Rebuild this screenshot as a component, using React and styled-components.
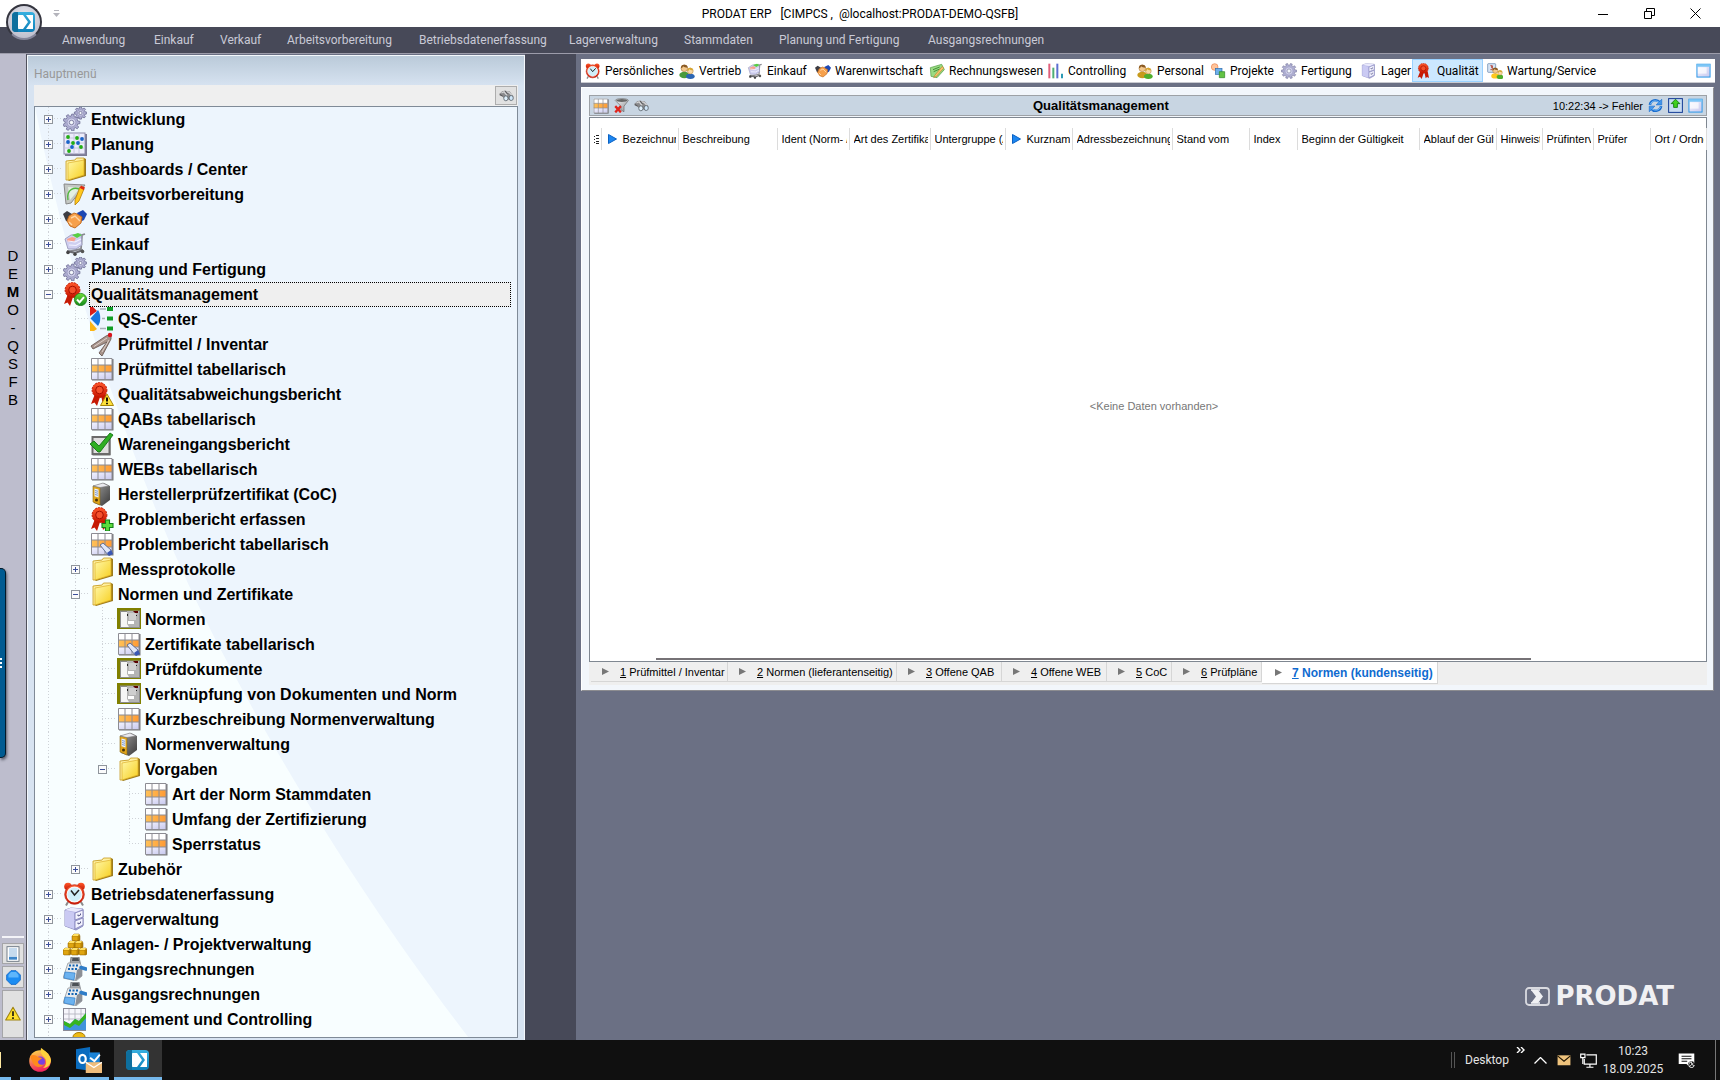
import React from "react";
import styled, { createGlobalStyle, css } from "styled-components";

const ui = `Roboto, "Open Sans", "Liberation Sans", sans-serif`;
const arial = `"Liberation Sans", Arial, sans-serif`;

const GlobalStyle = createGlobalStyle`
  * { box-sizing: border-box; }
  html, body { margin: 0; height: 100%; overflow: hidden; }
  body { font-family: ${ui}; font-size: 12px; color: #000; background: #6b7084; }
  button { font: inherit; color: inherit; border: 0; background: none; padding: 0; margin: 0; text-align: left; }
  ul { list-style: none; margin: 0; padding: 0; }
  svg { display: block; flex: none; }
`;

/* ---------- icons ---------- */

const Defs = styled.svg`
  position: absolute;
  width: 0;
  height: 0;
`;

const stops = (id, a, b, x2 = 0, y2 = 1) => (
  <linearGradient id={id} x1="0" y1="0" x2={x2} y2={y2}>
    <stop offset="0" stopColor={a} />
    <stop offset="1" stopColor={b} />
  </linearGradient>
);

const Gradients = () => (
  <Defs aria-hidden="true">
    <defs>
      {stops("gFolder", "#fff7a8", "#f7cf1e", 1, 1)}
      {stops("gOrange", "#ffc35a", "#ff9a33", 1, 0)}
      {stops("gLilac", "#f4f4ff", "#c9c9ee", 1, 1)}
      {stops("gRed", "#ff5a2c", "#c81400")}
      {stops("gGreen", "#6ddc3a", "#128a1c")}
      {stops("gSteel", "#f4f4f4", "#8d8f94", 1, 1)}
      {stops("gBinder", "#a2a2a2", "#3a3a3a", 1, 1)}
      {stops("gFire", "#ffe14a", "#f0265c", 0.3, 1)}
      {stops("gProdat", "#37b0e0", "#0d7fb8")}
    </defs>
  </Defs>
);

const gearPath = (cx, cy, r, n) => {
  const pts = [];
  const step = (Math.PI * 2) / n;
  for (let i = 0; i < n; i += 1) {
    const a = i * step;
    [[-0.32, 0.76], [-0.2, 1], [0.2, 1], [0.32, 0.76]].forEach(([da, k]) => {
      const t = a + da * step;
      pts.push(`${(cx + Math.cos(t) * r * k).toFixed(2)} ${(cy + Math.sin(t) * r * k).toFixed(2)}`);
    });
  }
  return `M${pts.join("L")}Z`;
};

const gear = (cx, cy, r, n) => (
  <g>
    <path d={gearPath(cx, cy, r, n)} fill="#aeaed2" stroke="#6f6f96" strokeWidth="0.8" />
    <circle cx={cx} cy={cy} r={r * 0.52} fill="#cfcfea" stroke="#8a8ab2" strokeWidth="0.6" />
    <circle cx={cx} cy={cy} r={r * 0.26} fill="#f4f8fc" stroke="#6b6b92" strokeWidth="0.8" />
  </g>
);

const grid = (
  <g>
    <rect x="2" y="2" width="21.500" height="21.500" fill="#77777b" />
    <rect x="1" y="1" width="21" height="21" fill="#fff" />
    <rect x="1" y="15" width="21" height="7" fill="url(#gLilac)" />
    <rect x="1" y="8" width="21" height="7" fill="url(#gOrange)" />
    <path d="M1.500 1.500H22v21H1.500ZM8 1.500v21M15 1.500v21M1 8h21M1 15h21" fill="none" stroke="#8c8c93" strokeWidth="1" />
  </g>
);

const rosette = (
  <g>
    <path d="M5 12 1 22l3.500-1.500L7 24l3-9ZM11 13l2 10 2-2 3 1.500-2-10Z" fill="#c61a04" />
    <circle cx="9.500" cy="8" r="7.400" fill="url(#gRed)" stroke="#c01800" strokeWidth="1" strokeDasharray="2 1" />
    <circle cx="9.500" cy="8" r="3.800" fill="#f4512c" stroke="#a51000" strokeWidth="1" />
  </g>
);

const people = (a, b) => (
  <g>
    <ellipse cx="8" cy="18" rx="7.500" ry="5" fill={a} />
    <circle cx="8" cy="8" r="5" fill="#f3c88c" stroke="#9a6a2a" strokeWidth="0.8" />
    <path d="M3 8a5 5 0 0 1 10-1c-3 0-6-1-7-2 0 2-2 3-3 3Z" fill="#8a5a24" />
    <ellipse cx="17" cy="20" rx="6.500" ry="4" fill={b} />
    <circle cx="17" cy="12" r="4.300" fill="#f8d8a4" stroke="#b58536" strokeWidth="0.8" />
    <path d="M12.700 12a4.300 4.300 0 0 1 8.600-1c-3 0-5-1-6-2 0 2-1 3-2.600 3Z" fill="#d8a630" />
  </g>
);

const binocular = (
  <g>
    <path d="M1 9 5 5l5-1 3 1 4 0 6 8-4 7-5-2-4 1-4-5-5-2Z" fill="#8a8a8c" />
    <path d="M4 8l4-2 5 6M12 6l4 1 5 5" stroke="#d4d4d6" strokeWidth="2" fill="none" />
    <path d="M1 10l5 3M10 5l4 5" stroke="#4d4d50" strokeWidth="1.400" />
    <ellipse cx="11" cy="16.500" rx="3.400" ry="4" fill="#dff0fb" stroke="#59616a" strokeWidth="1.300" />
    <ellipse cx="19.500" cy="16" rx="3.400" ry="4" fill="#cfe6f8" stroke="#59616a" strokeWidth="1.300" />
  </g>
);

const register = (
  <g>
    <path d="M8 0h8l1.500 7H7Z" fill="#a4a7ab" stroke="#77797e" strokeWidth="0.8" />
    <path d="M9.500 1h6l.5 3H9Z" fill="#4c5156" />
    <path d="M5 6h12l2 4v9l-6 5L0 21Z" fill="#e6e9ec" stroke="#979aa0" strokeWidth="0.8" />
    <path d="M12 24l2-11 5-3v9Z" fill="#8b8f96" />
    <path d="M2 15l10 1-1 7-10-2Z" fill="#6bb2f0" stroke="#2f7dc8" strokeWidth="0.7" />
    <path d="M6 8.500h2M9.500 8.500h2M13 8.500h2M5 12h2M8.500 12h2M12 12h2" stroke="#1465b4" strokeWidth="2" />
    <path d="M18 10.500l5 1.500" stroke="#2f7dc8" strokeWidth="3.500" strokeLinecap="round" />
  </g>
);

const form = (
  <g>
    <path d="M0 1h24v21H0Z" fill="#808000" />
    <path d="M3 3.500h20V21H3Z" fill="#8c8c8c" />
    <path d="M4 5h17v15H4Z" fill="#f6f6f6" />
    <path d="M10 4h12v16H12l-2-3Z" fill="#b4b4b4" />
    <path d="M12 6h7v7h-7Z" fill="#cfcfcf" />
    <path d="M11 14h6v3h-6Z" fill="#fff" />
    <path d="M16 4h5v2h-3Z" fill="#5b0000" />
    <path d="M10 7h1v2h-1ZM19 8h1v1h-1Z" fill="#222" />
  </g>
);

const binder = (
  <g>
    <path d="M3 4 14 1l6 3v14l-8 6-8-3Z" fill="url(#gBinder)" />
    <path d="M3 4 10 5.500V23l-7-3Z" fill="#e0a51c" stroke="#8a6814" strokeWidth="0.6" />
    <path d="M3 4 13 1l6 3-9 1.500Z" fill="#e9e9ee" stroke="#777" strokeWidth="0.6" />
    <path d="M4.500 6.500l4 1v8l-4-1.200Z" fill="#e8f0ff" />
    <path d="M5 8.500l3 .8M5 10.500l3 .8M5 12.500l3 .8" stroke="#7793c2" strokeWidth="0.9" />
    <circle cx="6.500" cy="18" r="1.500" fill="#493408" />
  </g>
);

const clock = (
  <g>
    <path d="M5 20 3 23.500M18 20l2 3.500" stroke="#8b8b8b" strokeWidth="2" />
    <circle cx="5" cy="4.500" r="3.800" fill="url(#gRed)" />
    <circle cx="18" cy="4.500" r="3.800" fill="url(#gRed)" />
    <circle cx="11.500" cy="12.500" r="9.800" fill="url(#gRed)" stroke="#c03020" strokeWidth="0.8" />
    <circle cx="11.500" cy="12.500" r="7.400" fill="#cfeffa" stroke="#f7f7f7" strokeWidth="1.200" />
    <path d="M8 8.500l3.500 4.500L16 8" fill="none" stroke="#222" strokeWidth="1.500" />
  </g>
);

const cabinet = (
  <g>
    <path d="M2 3 8 1l12 1v17l-7 4-11-4Z" fill="#b4b4e4" stroke="#8484ba" strokeWidth="0.9" />
    <path d="M2 3 8 .8l12 1.200-7 3Z" fill="#e9e9fc" />
    <path d="M2 3.500l9 2V22l-9-3Z" fill="#cacaf3" />
    <path d="M12 6l8-3v7l-8 3ZM12 14l8-3v7l-8 4Z" fill="#f4f4ff" stroke="#8787bb" strokeWidth="0.9" />
    <path d="M15 7.500v1.500l2.500-1V6.500M15 15.500v1.500l2.500-1V14.500" fill="none" stroke="#5a5a8a" />
  </g>
);

const cart = (
  <g>
    <path d="M4 20l14-3 1-14 3-1" stroke="#88888f" strokeWidth="1.800" fill="none" />
    <path d="M2 7l6-4 10-1 1 11-6 4H5Z" fill="#cfcff0" stroke="#9a9abc" strokeWidth="0.9" />
    <path d="M4 7l5-2 4 1-2 4-6 0Z" fill="#f8a08c" />
    <path d="M9 3l6-2 4 2-5 3Z" fill="#57cf42" />
    <path d="M5 9l7 1 6-3M6 13l7 .5 5-3" stroke="#f2f2ff" strokeWidth="1.200" fill="none" />
    <path d="M4 19l8 2 8-3" stroke="#6a6a70" strokeWidth="2" fill="none" />
    <circle cx="5" cy="20.500" r="1.800" fill="#444" />
    <circle cx="12" cy="22.300" r="1.700" fill="#444" />
    <circle cx="19.500" cy="19.500" r="1.800" fill="#555" />
  </g>
);

const shake = (
  <g>
    <path d="M0 7l4-3 5 3-2 8-4-1Z" fill="#3c3c44" />
    <path d="M24 7l-4-4-6 3 3 9 4-2Z" fill="#1c47b4" />
    <path d="M6 9l5-3 3 1 5 3-1 6-6 5-5-2-3-5Z" fill="#f6a04c" stroke="#bd6418" strokeWidth="0.9" />
    <path d="M8 11l4-2 5 5M9 18l-3-3" stroke="#ffd6a4" strokeWidth="1.400" fill="none" />
  </g>
);

const folder = (
  <g>
    <path d="M4 4 13 3l1-2h7l2 1v17L6 24 4 22Z" fill="#9c7c1e" />
    <path d="M3 4 12 3l1.500-2H21v17L5 23H3Z" fill="#fff0a0" stroke="#c79a1c" strokeWidth="0.8" />
    <path d="M5 6l16-3v15L5 23Z" fill="url(#gFolder)" stroke="#d6a51a" strokeWidth="0.6" />
  </g>
);

const setsquare = (
  <g>
    <path d="M1 2l21 1L8 21 3 22Z" fill="#c4c8c4" stroke="#888" strokeWidth="1" />
    <path d="M5 5l12 1-10 12Z" fill="#e4f0e2" />
    <path d="M5 18C3 7 12 4 18 8" fill="none" stroke="#4fb83c" strokeWidth="1.400" />
    <path d="M17 5l4 2-5 12-4 4 0-5Z" fill="#ffc81e" stroke="#b57f08" strokeWidth="0.8" />
    <path d="M18 3.500l4 2-1.200 2.500-4-2Z" fill="#e02a10" />
  </g>
);

const chart = (
  <g>
    <rect x="0.500" y="1.500" width="22" height="22" fill="#f6f6fc" stroke="#8a8a96" />
    <path d="M6 2v12M12 2v12M18 2v12M1 7h21M1 12h21" stroke="#b5b5c2" strokeWidth="0.9" />
    <path d="M1 14l6 3 5-5 4 2 7-8v17H1Z" fill="#3f93dc" />
    <path d="M1 14l6 3 5-5 4 2 7-8v5l-7 8-4-2-5 4-6-3Z" fill="#36b41e" />
  </g>
);

const gold = (x, y) => (
  <g key={`${x}-${y}`} transform={`translate(${x} ${y})`}>
    <path d="M0 2 2 0h5l1 2v4l-1 1H1L0 6Z" fill="#b98406" stroke="#8a5f04" strokeWidth="0.5" />
    <path d="M0 2 2 0h5L6 2Z" fill="#ffe063" />
    <path d="M0.500 2.500h5v4h-5Z" fill="#dfa510" />
  </g>
);

const prodat = (
  <g>
    <rect x="0" y="2" width="23" height="20" rx="4" fill="url(#gProdat)" />
    <path d="M0 6a4 4 0 0 1 4-4h2v20H4a4 4 0 0 1-4-4Z" fill="#0e6f9e" />
    <path d="M6 5h5l5 7-5 7H6l4-7Z" fill="#fff" />
    <path d="M6 5l5 7-5 7Z" fill="#fff" />
    <path d="M14 5h7v14h-7l5-7Z" fill="#fff" />
  </g>
);

const SHAPES = {
  gears: (
    <g>
      {gear(8.500, 15.500, 8.500, 9)}
      {gear(17.500, 6, 6.200, 8)}
    </g>
  ),
  gear: gear(12, 12, 11.500, 10),
  plan: (
    <g>
      <rect x="2" y="2" width="22" height="22" fill="#7b7b94" />
      <rect x="1" y="1" width="21" height="21" fill="#ececfb" stroke="#8a8aa8" strokeWidth="1" />
      <path d="M6 1v21M11 1v21M16 1v21M1 6h21M1 11h21M1 16h21" stroke="#c4c4dd" strokeWidth="0.9" />
      {[[5, 5], [14, 6], [10, 11], [18, 15], [6, 19]].map(([x, y]) => <circle key={`g${x}`} cx={x} cy={y} r="1.900" fill="#22ae14" />)}
      {[[19, 7], [5, 10], [15, 11], [9, 15]].map(([x, y]) => <circle key={`b${x}`} cx={x} cy={y} r="1.900" fill="#1663c9" />)}
    </g>
  ),
  folder,
  setsquare,
  shake,
  cart,
  rosette,
  rosetteOk: (
    <g>
      {rosette}
      <circle cx="17.500" cy="17.500" r="6.200" fill="url(#gGreen)" stroke="#1b7a1b" strokeWidth="0.7" />
      <path d="M14 17.500l2.600 2.700 4.400-5" fill="none" stroke="#fff" strokeWidth="2" />
    </g>
  ),
  rosetteWarn: (
    <g>
      {rosette}
      <path d="M17 12 23.500 23.500H10.500Z" fill="#ffe23c" stroke="#a88608" strokeWidth="1" />
      <path d="M17 15.500v4M17 20.700v1.600" stroke="#000" strokeWidth="1.800" />
    </g>
  ),
  rosettePlus: (
    <g>
      {rosette}
      <path d="M15.500 13h4v3.500H23v4h-3.500V24h-4v-3.500H12v-4h3.500Z" fill="#5cdb3c" stroke="#14801a" strokeWidth="1.100" />
    </g>
  ),
  center: (
    <g>
      <path d="M0 0h3l4 4-7 5Z" fill="#d91e18" />
      <path d="M0.500 11.500 8 3c3 4 3 12 0 16Z" fill="#1976e0" />
      <path d="M0 14l7 8-3 2H0Z" fill="#fdb515" />
      <path d="M10 2h6M12 11.500h3M10 21.500h6" stroke="#a8b0b8" strokeWidth="1.400" />
      <path d="M17 0h6v4h-6ZM17 9.500h6v4h-6ZM17 19.500h6v4h-6Z" fill="#0f9d24" />
    </g>
  ),
  calliper: (
    <g>
      <path d="M21 2 16 4 1 14l2 3 14-7-8 11 3 3L21 7Z" fill="#a8948c" stroke="#6c5a54" strokeWidth="0.9" />
      <path d="M4 14.500 17 6M12 20 19 8" stroke="#ddd0ca" strokeWidth="1" />
      <circle cx="20" cy="3" r="2.200" fill="#d8141c" />
    </g>
  ),
  grid,
  gridTool: (
    <g>
      {grid}
      <path d="M10 13l3-2 8 7 1 4-4 1Z" fill="#dfe6f8" stroke="#56648c" strokeWidth="0.9" />
      <path d="M17 21l4-3 2 4-4 2Z" fill="#3a57b4" />
    </g>
  ),
  check: (
    <g>
      <rect x="2.500" y="4.500" width="18" height="19" fill="#777" />
      <rect x="2.500" y="5" width="17" height="17" fill="#dedede" stroke="#6a6a6a" strokeWidth="2" />
      <path d="M0 12l4-3 5 5L20 1l3 2L10 20H8Z" fill="#2fae22" stroke="#127414" strokeWidth="0.9" />
    </g>
  ),
  binder,
  form,
  clock,
  cabinet,
  bars: <g>{[[9, 2], [5, 9], [12, 9], [0, 16], [8, 16], [16, 16]].map(([x, y]) => gold(x, y))}</g>,
  register,
  chart,
  coin: <ellipse cx="16" cy="5" rx="6" ry="4.500" fill="#eebb14" stroke="#a87c08" />,
  people: people("#4a9a3c", "#2c66b4"),
  staff: people("#c79a1c", "#4fae2c"),
  service: (
    <g>
      <rect x="1" y="1" width="12" height="13" rx="1" fill="#d6e4f4" stroke="#5b7da8" />
      <path d="M5 4h3v2H6h2v4H5" fill="none" stroke="#b03020" strokeWidth="1.200" />
      <g transform="translate(6 5) scale(.8)">{people("#ffc81e", "#4fae2c")}</g>
    </g>
  ),
  invoice: (
    <g>
      <path d="M2 7 19 2l4 8-11 12-9-2Z" fill="#9adb84" stroke="#4b9a3c" />
      <path d="M6 10l10-4M7 13l9-4" stroke="#3c8a30" strokeWidth="1.400" />
      <path d="M20 5 9 18l-2 4 4-2L22 8Z" fill="#f9c46c" stroke="#b0761c" strokeWidth="0.8" />
    </g>
  ),
  barChart: (
    <g>
      <path d="M2 1v22" stroke="#e0607c" strokeWidth="3" />
      <path d="M8 7v16" stroke="#4fae74" strokeWidth="3" />
      <path d="M14 1v22" stroke="#5b6fd0" strokeWidth="3" />
      <path d="M21 16v7" stroke="#2c9ab4" strokeWidth="3" />
    </g>
  ),
  project: (
    <g>
      <circle cx="7" cy="6" r="5" fill="#ffc49a" stroke="#e8804c" />
      <rect x="8" y="8" width="10" height="9" fill="#6db0ea" stroke="#2f6cae" />
      <path d="M14 13h8v9h-8Z" fill="#63c344" stroke="#2a8420" />
    </g>
  ),
  window: (
    <g>
      <rect x="1.500" y="2" width="21" height="20.500" fill="url(#gLilac)" stroke="#2a97e8" strokeWidth="1.600" />
      <rect x="3" y="7" width="14" height="10" fill="#fff" opacity="0.7" />
      <rect x="1.500" y="2" width="21" height="4" fill="#7cc6f6" />
    </g>
  ),
  binocular,
  filterOff: (
    <g>
      <path d="M2 4c0-4 21-4 21 0l-7 9v9l-5-3v-6Z" fill="url(#gSteel)" stroke="#666" />
      <ellipse cx="12.500" cy="4" rx="9" ry="2.500" fill="#666" />
      <path d="M2 13l9 10M11 13 2 23" stroke="#e0241c" strokeWidth="3.600" />
    </g>
  ),
  refresh: (
    <g fill="none" stroke="#1c6fd0" strokeWidth="4">
      <path d="M3 11c1-8 11-10 16-4" />
      <path d="M21 13c-1 8-11 10-16 4" />
      <path d="M22 2v9h-9ZM2 22v-9h9Z" fill="#3f94ea" stroke="#1c6fd0" strokeWidth="1" />
      <path d="M4 10c2-6 9-7 14-3M20 14c-2 6-9 7-14 3" stroke="#7cc0fa" strokeWidth="1.500" />
    </g>
  ),
  upload: (
    <g>
      <rect x="1" y="1" width="22" height="22" fill="#c9dcf2" stroke="#123a94" strokeWidth="1.600" />
      <path d="M12 2l7 7h-4v6H9V9H5Z" fill="#42d11e" stroke="#117a10" strokeWidth="1.400" />
    </g>
  ),
  page: (
    <g>
      <rect x="3" y="1" width="18" height="22" fill="#fff" stroke="#6d7884" strokeWidth="1.400" />
      <path d="M6 4.500h12M6 7.500h12M6 10.500h12M6 13.500h12" stroke="#8db6dc" strokeWidth="1.500" />
      <rect x="6" y="16" width="12" height="4.500" fill="#3f86c8" />
    </g>
  ),
  ball: (
    <g>
      <path d="M8 1h8l7 7v8l-7 7H8l-7-7V8Z" fill="#1c8cf2" stroke="#0b5fc0" strokeWidth="1.200" />
      <path d="M8 3h8l4 5v4H4V8Z" fill="#7cc8ff" opacity="0.7" />
    </g>
  ),
  warn: (
    <g>
      <path d="M12 2 23 21H1Z" fill="#ffe02c" stroke="#a08410" strokeWidth="1.600" strokeLinejoin="round" />
      <path d="M12 8v7M12 17v2.500" stroke="#111" strokeWidth="2.400" />
    </g>
  ),
  prodat,
  firefox: (
    <g>
      <circle cx="12" cy="13" r="10.800" fill="url(#gFire)" />
      <path d="M13 0c3 2 9 6 10 12 0 5-4 8-8 8 4-3 4-8 1-11-2-2-4-4-3-9Z" fill="#ffd23c" />
      <circle cx="12" cy="13.500" r="5" fill="#7a3fe0" />
      <path d="M2 8c3-2 6-1 8 1l4 1c-1 2-4 2-4 4s3 4 6 2c-2 4-9 4-11-1C4 13 3 11 2 8Z" fill="#ff8a1c" />
    </g>
  ),
  outlook: (
    <g>
      <path d="M0 2 13 0v22L0 20Z" fill="#0a6cbf" />
      <path d="M12 5h10v11H12Z" fill="#1b83d6" />
      <path d="M13 10l4 3 5-6" stroke="#fff" strokeWidth="1.800" fill="none" />
      <ellipse cx="6" cy="11" rx="3" ry="3.800" fill="none" stroke="#fff" strokeWidth="2" />
      <path d="M9 14h15v10H9Z" fill="#f0bd7c" />
      <path d="M9 14l7.500 5L24 14" fill="none" stroke="#fff" strokeWidth="1.200" />
    </g>
  ),
  mail: (
    <g>
      <rect x="1" y="4" width="22" height="17" fill="#eec27c" />
      <path d="M1 5l11 9L23 5" fill="none" stroke="#201400" strokeWidth="2" />
    </g>
  ),
  network: (
    <g fill="none" stroke="#fff" strokeWidth="1.700">
      <path d="M9 4h14v13H6V10M14 17v4M9 21.500h10" />
      <path d="M1 3h6v5H1ZM4 8v9" />
    </g>
  ),
  notice: (
    <g>
      <path d="M1 2h22v15h-6v5l-5-5H1Z" fill="#fff" />
      <path d="M5 6h14M5 9.500h14M5 13h8" stroke="#101010" strokeWidth="1.500" />
      <circle cx="19" cy="18" r="5" fill="#101010" />
      <path d="M19 14a4 4 0 1 0 4 5 4 4 0 0 1-4-5M16 21l6-6" fill="none" stroke="#fff" strokeWidth="1.200" />
    </g>
  ),
};

const Icon = ({ name, size = 24 }) => (
  <svg width={size} height={size} viewBox="0 0 24 24" aria-hidden="true">
    {SHAPES[name]}
  </svg>
);

/* ---------- window frame ---------- */

const Screen = styled.div`
  position: relative;
  display: flex;
  flex-direction: column;
  height: 100vh;
`;

const TitleBar = styled.header`
  display: grid;
  grid-template-columns: 1fr auto 1fr;
  align-items: center;
  height: 27px;
  flex: none;
  background: #fff;
`;

const QuickAccess = styled.button`
  margin-left: 53px;
  justify-self: start;
`;

const Title = styled.h1`
  margin: 0;
  font: 12px/24px ${ui};
  white-space: pre;
`;

const WindowButtons = styled.div`
  display: flex;
  justify-content: flex-end;
  padding-right: 2px;
`;

const WindowButton = styled.button`
  display: grid;
  place-items: center;
  width: 46px;
  height: 24px;
`;

const Orb = styled.button`
  position: absolute;
  left: 6px;
  top: 4px;
  z-index: 2;
  display: grid;
  place-items: center;
  width: 36px;
  height: 36px;
  border: 2px solid #34353f;
  border-bottom-color: #85869a;
  border-radius: 50%;
  background: radial-gradient(circle at 50% 35%, #e9e9ef, #b3b4c4);
`;

const MenuBar = styled.nav`
  display: flex;
  height: 27px;
  flex: none;
  padding-left: 62px;
  background: #474958;
  border-bottom: 1px solid #9c9caa;
`;

const MenuItem = styled.button`
  width: ${(p) => p.$w}px;
  flex: none;
  color: #c9cad6;
  line-height: 26px;
  white-space: nowrap;
`;

const Workspace = styled.div`
  display: flex;
  flex: 1;
  min-height: 0;
`;

/* ---------- left strip ---------- */

const Strip = styled.aside`
  display: flex;
  flex-direction: column;
  width: 27px;
  flex: none;
  background: #bdbdcd;
  border-right: 1px solid #50515c;
  padding-bottom: 2px;
`;

const Letters = styled.div`
  padding-top: 193px;
  flex: 1;
  font-family: ${arial};
  font-size: 15px;
  line-height: 18px;
  text-align: center;

  b {
    display: block;
    font-weight: 400;
  }
  b:nth-child(3) {
    font-weight: 700;
  }
`;

const Handle = styled.button`
  position: absolute;
  left: 0;
  top: 568px;
  width: 6px;
  height: 190px;
  border: 1px solid #001a2a;
  border-left: 0;
  border-radius: 0 5px 5px 0;
  background: #005b91;
  box-shadow: 1px 2px 3px #555866;

  &::after {
    content: "";
    display: block;
    width: 2px;
    height: 11px;
    background: repeating-linear-gradient(#fff 0 2px, transparent 2px 4px);
  }
`;

const StripTools = styled.div`
  display: flex;
  flex-direction: column;
  gap: 2px;
  margin: 0 2px;
  padding-top: 5px;
  border-top: 2px solid #f4f4f8;
`;

const StripButton = styled.button`
  display: grid;
  place-items: center;
  height: ${(p) => p.$h}px;
  border: 1px solid #a5a5a8;
  background: #e1e1e1;
`;

/* ---------- main menu window ---------- */

const MenuWindow = styled.section`
  display: flex;
  flex-direction: column;
  width: 498px;
  flex: none;
  margin-top: 1px;
  padding: 0 6px 2px 6px;
  border: 1px solid #f4f8fc;
  border-bottom: 0;
  background: linear-gradient(#bacad9, #d7e3f1 30px);
`;

const MenuTitle = styled.h2`
  margin: 0;
  padding-top: 8px;
  height: 29px;
  font: 12px/20px ${ui};
  color: #989898;
`;

const SearchRow = styled.div`
  display: flex;
  height: 21px;
  flex: none;
  background: #efefef;
`;

const SearchInput = styled.input`
  flex: 1;
  border: 0;
  background: none;
  outline: none;
`;

const SearchButton = styled.button`
  display: grid;
  place-items: center;
  width: 22px;
  height: 19px;
  margin: 1px 1px 0 0;
  border: 1px solid #adadad;
  background: #e1e1e1;
`;

const TreeBox = styled.div`
  position: relative;
  flex: 1;
  min-height: 0;
  overflow: hidden;
  border: 1px solid #7f8a97;
  background: #edf5fd;
`;

const Backdrop = styled.svg`
  position: absolute;
  inset: 0;
  width: 100%;
  height: 100%;
`;

const Tree = styled.ul`
  position: relative;
`;

const Row = styled.li`
  display: flex;
  height: 25px;
`;

const dotsV = "repeating-linear-gradient(#cfd3d8 0 1px, transparent 1px 3px)";
const dotsH = "repeating-linear-gradient(90deg, #cfd3d8 0 1px, transparent 1px 3px)";

const Guide = styled.span`
  width: 27px;
  flex: none;
  background: ${(p) => (p.$on ? dotsV : "none")} 13px 0 / 1px 100% no-repeat;
`;

const Branch = styled.span`
  display: grid;
  place-items: center;
  width: 27px;
  flex: none;
  background:
    ${dotsV} 13px 0 / 1px ${(p) => (p.$last ? "12px" : "100%")} no-repeat,
    ${dotsH} 13px 11px / 14px 1px no-repeat;
`;

const Expander = styled.button`
  display: grid;
  place-items: center;
  width: 9px;
  height: 9px;
  border: 1px solid #8f959c;
  background: #fbfbfb;
`;

const IconCell = styled.span`
  width: 27px;
  flex: none;
  padding-left: 1px;
`;

const Label = styled.button`
  flex: 1;
  margin-right: 6px;
  border: 1px dotted transparent;
  padding-left: 1px;
  font: bold 16px/22px ${arial};
  white-space: nowrap;
  ${(p) =>
    p.$selected &&
    css`
      border-color: #000;
      background: #efefef;
    `}
`;

/* level, icon, label, expander, last child */
const TREE = [
  [0, "gears", "Entwicklung", "+"],
  [0, "plan", "Planung", "+"],
  [0, "folder", "Dashboards / Center", "+"],
  [0, "setsquare", "Arbeitsvorbereitung", "+"],
  [0, "shake", "Verkauf", "+"],
  [0, "cart", "Einkauf", "+"],
  [0, "gears", "Planung und Fertigung", "+"],
  [0, "rosetteOk", "Qualitätsmanagement", "-"],
  [1, "center", "QS-Center"],
  [1, "calliper", "Prüfmittel / Inventar"],
  [1, "grid", "Prüfmittel tabellarisch"],
  [1, "rosetteWarn", "Qualitätsabweichungsbericht"],
  [1, "grid", "QABs tabellarisch"],
  [1, "check", "Wareneingangsbericht"],
  [1, "grid", "WEBs tabellarisch"],
  [1, "binder", "Herstellerprüfzertifikat (CoC)"],
  [1, "rosettePlus", "Problembericht erfassen"],
  [1, "gridTool", "Problembericht tabellarisch"],
  [1, "folder", "Messprotokolle", "+"],
  [1, "folder", "Normen und Zertifikate", "-"],
  [2, "form", "Normen"],
  [2, "gridTool", "Zertifikate tabellarisch"],
  [2, "form", "Prüfdokumente"],
  [2, "form", "Verknüpfung von Dokumenten und Norm"],
  [2, "grid", "Kurzbeschreibung Normenverwaltung"],
  [2, "binder", "Normenverwaltung"],
  [2, "folder", "Vorgaben", "-", true],
  [3, "grid", "Art der Norm Stammdaten"],
  [3, "grid", "Umfang der Zertifizierung"],
  [3, "grid", "Sperrstatus", "", true],
  [1, "folder", "Zubehör", "+", true],
  [0, "clock", "Betriebsdatenerfassung", "+"],
  [0, "cabinet", "Lagerverwaltung", "+"],
  [0, "bars", "Anlagen- / Projektverwaltung", "+"],
  [0, "register", "Eingangsrechnungen", "+"],
  [0, "register", "Ausgangsrechnungen", "+"],
  [0, "chart", "Management und Controlling", "+"],
  [0, "coin", "", "+"],
];

const TreeRow = ({ level, icon, label, toggle, last }) => (
  <Row>
    {Array.from({ length: level }, (_, i) => (
      <Guide key={i} $on={i < 2} />
    ))}
    <Branch $last={last}>
      {toggle ? (
        <Expander aria-label={toggle === "+" ? "Aufklappen" : "Zuklappen"}>
          <svg width="7" height="7" viewBox="0 0 7 7" stroke="#3c4f9a">
            <path d={toggle === "+" ? "M1 3.500h5M3.500 1v5" : "M1 3.500h5"} />
          </svg>
        </Expander>
      ) : null}
    </Branch>
    <IconCell>
      <Icon name={icon} />
    </IconCell>
    {label ? <Label $selected={label === "Qualitätsmanagement"}>{label}</Label> : null}
  </Row>
);

/* ---------- desktop area ---------- */

const Divider = styled.div`
  width: 51px;
  flex: none;
  background: #474958;
`;

const Desktop = styled.main`
  display: flex;
  flex-direction: column;
  flex: 1;
  min-width: 0;
  padding: 5px 5px 0 5px;
  background: #6b7084;
`;

const Toolbar = styled.div`
  display: flex;
  align-items: center;
  height: 24px;
  flex: none;
  padding: 0 4px;
  background: #fff;
  border-bottom: 1px solid #c9cad0;
`;

const ToolButton = styled.button`
  display: flex;
  align-items: center;
  gap: 4px;
  width: ${(p) => p.$w}px;
  height: 23px;
  flex: none;
  white-space: nowrap;
  ${(p) =>
    p.$active &&
    css`
      margin-right: 4px;
      padding-left: 4px;
      border: 1px solid #99d1ff;
      background: #cce8ff;
    `}
`;

const ToolEnd = styled.button`
  margin-left: auto;
`;

const Panel = styled.section`
  display: flex;
  flex-direction: column;
  height: 604px;
  flex: none;
  margin: 4px 1px 0 0;
  padding: 7px 6px 5px 7px;
  border: 1px solid #fff;
  border-right-color: #8c8c90;
  border-bottom-color: #8c8c90;
  background: #f2f6fb;
`;

const PanelHeader = styled.header`
  display: flex;
  align-items: center;
  height: 21px;
  flex: none;
  padding: 0 3px;
  border: 1px solid #9da1a6;
  background: #c8d5e2;
`;

const PanelTools = styled.div`
  display: flex;
  align-items: center;
  gap: 5px;
  font: 11px/18px ${arial};
`;

const PanelTitle = styled.h2`
  flex: 1;
  margin: 0;
  font: bold 13px/19px ${arial};
  text-align: center;
`;

const GridBox = styled.div`
  display: flex;
  flex-direction: column;
  flex: 1;
  min-height: 0;
  margin-top: 1px;
  padding-top: 10px;
  border: 1px solid #7f8791;
  background: #fff;
`;

const Grid = styled.table`
  width: 100%;
  flex: none;
  table-layout: fixed;
  border-collapse: collapse;

  th {
    height: 22px;
    padding: 0 2px 0 4px;
    border-right: 1px solid #dcdcdc;
    font: 11px/22px ${arial};
    text-align: left;
    white-space: nowrap;
  }
`;

const HeadCell = styled.span`
  display: flex;
  align-items: center;
  gap: 6px;
  padding-left: ${(p) => (p.$arrow ? 2 : 0)}px;
  overflow: hidden;
`;

const Empty = styled.p`
  display: grid;
  place-items: center;
  flex: 1;
  margin: 0;
  padding: 4px 0 0 12px;
  font: 11px/14px ${arial};
  color: #777;
`;

const ScrollThumb = styled.div`
  height: 2px;
  margin: 0 175px 1px 66px;
  background: #767276;
`;

const Tabs = styled.div`
  display: flex;
  height: 23px;
  flex: none;
  padding-left: 2px;
  background: #efefef;
`;

const Tab = styled.button`
  display: flex;
  align-items: center;
  gap: 11px;
  width: ${(p) => p.$w}px;
  height: 20px;
  padding-left: 11px;
  border: 1px solid #d6d6d6;
  border-width: 0 1px 1px 0;
  font: 11px/18px ${arial};
  white-space: nowrap;
  ${(p) =>
    p.$active &&
    css`
      height: 22px;
      padding-left: 13px;
      gap: 10px;
      font-size: 12px;
      font-weight: 700;
      color: #0f6bd0;
      background: #fff;
    `}
`;

const Brand = styled.div`
  display: flex;
  align-items: center;
  align-self: flex-end;
  gap: 5px;
  margin: auto 41px 30px 0;
  font: bold 26px/28px "DejaVu Sans", sans-serif;
  color: #f0f0f3;
`;

const TOOLS = [
  ["clock", "Persönliches", 94],
  ["people", "Vertrieb", 68],
  ["cart", "Einkauf", 68],
  ["shake", "Warenwirtschaft", 114],
  ["invoice", "Rechnungswesen", 119],
  ["barChart", "Controlling", 89],
  ["staff", "Personal", 73],
  ["project", "Projekte", 71],
  ["gear", "Fertigung", 80],
  ["cabinet", "Lager", 51],
  ["rosette", "Qualität", 71, true],
  ["service", "Wartung/Service", 130],
];

const COLUMNS = [
  ["", 11],
  ["Bezeichnung", 77, true],
  ["Beschreibung", 99],
  ["Ident (Norm- / Zertifikat)", 72],
  ["Art des Zertifikats", 81],
  ["Untergruppe (Art)", 75],
  ["Kurzname", 67, true],
  ["Adressbezeichnung", 100],
  ["Stand vom", 77],
  ["Index", 48],
  ["Beginn der Gültigkeit", 122],
  ["Ablauf der Gültigkeit", 77],
  ["Hinweistext", 46],
  ["Prüfintervall", 51],
  ["Prüfer", 57],
  ["Ort / Ordner", 56],
];

const TABS = [
  ["1", "Prüfmittel / Inventar", 137],
  ["2", "Normen (lieferantenseitig)", 169],
  ["3", "Offene QAB", 105],
  ["4", "Offene WEB", 105],
  ["5", "CoC", 65],
  ["6", "Prüfpläne", 90],
  ["7", "Normen (kundenseitig)", 176, true],
];

const MENU = [
  ["Anwendung", 92],
  ["Einkauf", 66],
  ["Verkauf", 67],
  ["Arbeitsvorbereitung", 132],
  ["Betriebsdatenerfassung", 150],
  ["Lagerverwaltung", 115],
  ["Stammdaten", 95],
  ["Planung und Fertigung", 149],
  ["Ausgangsrechnungen", 130],
];

/* ---------- taskbar ---------- */

const Taskbar = styled.footer`
  display: flex;
  height: 40px;
  flex: none;
  background: #101010;
  color: #e4e4e4;
`;

const TaskSliver = styled.span`
  width: 11px;
  margin-right: 9px;
  border-bottom: 3px solid #76b9ed;
  background: linear-gradient(#ffe9a0, #ffe9a0) 0 12px / 1px 16px no-repeat;
`;

const Task = styled.button`
  display: grid;
  place-items: center;
  width: ${(p) => p.$w}px;
  margin-right: ${(p) => p.$gap}px;
  padding-top: 3px;
  border-bottom: 3px solid #76b9ed;
  background: ${(p) => (p.$active ? "#333" : "none")};
`;

const Tray = styled.div`
  display: flex;
  align-items: center;
  margin-left: auto;
  height: 40px;
`;

const TrayGrip = styled.span`
  width: 4px;
  height: 16px;
  margin-right: 10px;
  border: 1px solid #555;
  border-width: 0 1px;
`;

const TrayLabel = styled.button`
  width: 51px;
  line-height: 16px;
`;

const TrayMore = styled.button`
  align-self: flex-start;
  width: 12px;
  padding-top: 7px;
`;

const TrayIcon = styled.button`
  display: grid;
  place-items: center;
  width: 24px;
  height: 24px;
`;

const Clock = styled.time`
  width: 66px;
  line-height: 18px;
  text-align: center;
`;

const NoticeButton = styled.button`
  margin: 0 20px 0 12px;
`;

const ShowDesktop = styled.span`
  width: 5px;
  height: 40px;
  border-left: 1px solid #777;
`;

export default function App() {
  return (
    <Screen>
      <GlobalStyle />
      <Gradients />

      <TitleBar>
        <QuickAccess aria-label="Schnellzugriff anpassen">
          <svg width="7" height="7" viewBox="0 0 7 7" fill="#b4b4bc">
            <path d="M1 0h5v1H1ZM0 3h7L3.500 7Z" />
          </svg>
        </QuickAccess>
        <Title>{"PRODAT ERP   [CIMPCS ,  @localhost:PRODAT-DEMO-QSFB]"}</Title>
        <WindowButtons>
          <WindowButton aria-label="Minimieren">
            <svg width="10" height="10" viewBox="0 0 10 10" stroke="#000"><path d="M0 5.500h10" /></svg>
          </WindowButton>
          <WindowButton aria-label="Verkleinern">
            <svg width="11" height="11" viewBox="0 0 11 11" fill="none" stroke="#000">
              <path d="M.5 3.500h7v7h-7ZM2.500 3V.5h8v7H8" />
            </svg>
          </WindowButton>
          <WindowButton aria-label="Schließen">
            <svg width="11" height="11" viewBox="0 0 11 11" stroke="#000"><path d="M.5.5l10 10M10.500.5l-10 10" /></svg>
          </WindowButton>
        </WindowButtons>
      </TitleBar>
      <Orb aria-label="PRODAT">
        <Icon name="prodat" size={24} />
      </Orb>

      <MenuBar>
        {MENU.map(([text, w]) => (
          <MenuItem key={text} $w={w}>{text}</MenuItem>
        ))}
      </MenuBar>

      <Workspace>
        <Strip>
          <Letters>
            {"DEMO-QSFB".split("").map((c, i) => <b key={i}>{c}</b>)}
          </Letters>
          <StripTools>
            <StripButton $h={21} aria-label="Liste"><Icon name="page" size={16} /></StripButton>
            <StripButton $h={22} aria-label="Status"><Icon name="ball" size={15} /></StripButton>
            <StripButton $h={48} aria-label="Warnungen"><Icon name="warn" size={16} /></StripButton>
          </StripTools>
        </Strip>
        <Handle aria-label="Seitenleiste" />

        <MenuWindow>
          <MenuTitle>Hauptmenü</MenuTitle>
          <SearchRow>
            <SearchInput aria-label="Suche im Hauptmenü" />
            <SearchButton aria-label="Suchen"><Icon name="binocular" size={15} /></SearchButton>
          </SearchRow>
          <TreeBox>
            <Backdrop viewBox="0 0 483 930" preserveAspectRatio="none" aria-hidden="true">
              <path d="M0 0C40 200 110 400 190 550S350 820 434 930H0Z" fill="#f8feff" />
            </Backdrop>
            <Tree>
              {TREE.map(([level, icon, label, toggle, last], i) => (
                <TreeRow key={i} level={level} icon={icon} label={label} toggle={toggle} last={last} />
              ))}
            </Tree>
          </TreeBox>
        </MenuWindow>

        <Divider />

        <Desktop>
          <Toolbar>
            {TOOLS.map(([icon, text, w, active]) => (
              <ToolButton key={text} $w={w} $active={active}>
                <Icon name={icon} size={16} />
                {text}
              </ToolButton>
            ))}
            <ToolEnd aria-label="Fenster"><Icon name="window" size={15} /></ToolEnd>
          </Toolbar>

          <Panel>
            <PanelHeader>
              <PanelTools>
                <Icon name="grid" size={16} />
                <Icon name="filterOff" size={15} />
                <Icon name="binocular" size={15} />
              </PanelTools>
              <PanelTitle>Qualitätsmanagement</PanelTitle>
              <PanelTools>
                <span>{"10:22:34 -> Fehler"}</span>
                <Icon name="refresh" size={15} />
                <Icon name="upload" size={15} />
                <Icon name="window" size={15} />
              </PanelTools>
            </PanelHeader>

            <GridBox>
              <Grid>
                <colgroup>
                  {COLUMNS.map(([text, w]) => <col key={text} width={w} />)}
                </colgroup>
                <thead>
                  <tr>
                    {COLUMNS.map(([text, , arrow]) => (
                      <th key={text} scope="col">
                        <HeadCell $arrow={arrow}>
                          {text === "" && (
                            <svg width="7" height="9" viewBox="0 0 7 9" fill="#222">
                              <path d="M2 0h5v1H2ZM2 3h5v1H2ZM2 6h5v1H2ZM2 8h5v1H2ZM0 1h1v1H0ZM0 4h1v1H0ZM0 7h1v1H0Z" />
                            </svg>
                          )}
                          {arrow && (
                            <svg width="9" height="10" viewBox="0 0 9 10">
                              <path d="M.5.5 8.500 5l-8 4.500Z" fill="#1c86f0" stroke="#0b62c4" />
                            </svg>
                          )}
                          {text}
                        </HeadCell>
                      </th>
                    ))}
                  </tr>
                </thead>
              </Grid>
              <Empty>{"<Keine Daten vorhanden>"}</Empty>
              <ScrollThumb />
            </GridBox>

            <Tabs>
              {TABS.map(([num, text, w, active]) => (
                <Tab key={num} $w={w} $active={active}>
                  <svg width="7" height="7" viewBox="0 0 7 7" fill="#777"><path d="M0 0l7 3.500L0 7Z" /></svg>
                  <span><u>{num}</u> {text}</span>
                </Tab>
              ))}
            </Tabs>
          </Panel>

          <Brand>
            <svg width="25" height="19" viewBox="0 0 25 19">
              <rect x="1" y="1" width="23" height="17" rx="3" fill="none" stroke="#d9dae0" strokeWidth="1.800" />
              <path d="M6 3h7l5 6.500-5 6.500H6l5-6.500Z" fill="#f0f0f3" />
              <path d="M6 3h9M6 16h9" stroke="#f0f0f3" strokeWidth="1.500" />
            </svg>
            PRODAT
          </Brand>
        </Desktop>
      </Workspace>

      <Taskbar>
        <TaskSliver />
        <Task $w={40} $gap={9} aria-label="Firefox"><Icon name="firefox" /></Task>
        <Task $w={40} $gap={5} aria-label="Outlook"><Icon name="outlook" size={26} /></Task>
        <Task $w={48} $gap={0} $active aria-label="PRODAT"><Icon name="prodat" /></Task>
        <Tray>
          <TrayGrip />
          <TrayLabel>Desktop</TrayLabel>
          <TrayMore aria-label="Mehr">
            <svg width="9" height="6" viewBox="0 0 9 6" fill="none" stroke="#fff" strokeWidth="1.400"><path d="M1 0l3 3-3 3M5 0l3 3-3 3" /></svg>
          </TrayMore>
          <TrayIcon aria-label="Ausgeblendete Symbole">
            <svg width="13" height="7" viewBox="0 0 13 7" fill="none" stroke="#fff" strokeWidth="1.300"><path d="M.5 6.500l6-6 6 6" /></svg>
          </TrayIcon>
          <TrayIcon aria-label="Neue E-Mail"><Icon name="mail" size={14} /></TrayIcon>
          <TrayIcon aria-label="Netzwerk"><Icon name="network" size={17} /></TrayIcon>
          <Clock>10:23<br />18.09.2025</Clock>
          <NoticeButton aria-label="Benachrichtigungen"><Icon name="notice" size={17} /></NoticeButton>
          <ShowDesktop />
        </Tray>
      </Taskbar>
    </Screen>
  );
}
